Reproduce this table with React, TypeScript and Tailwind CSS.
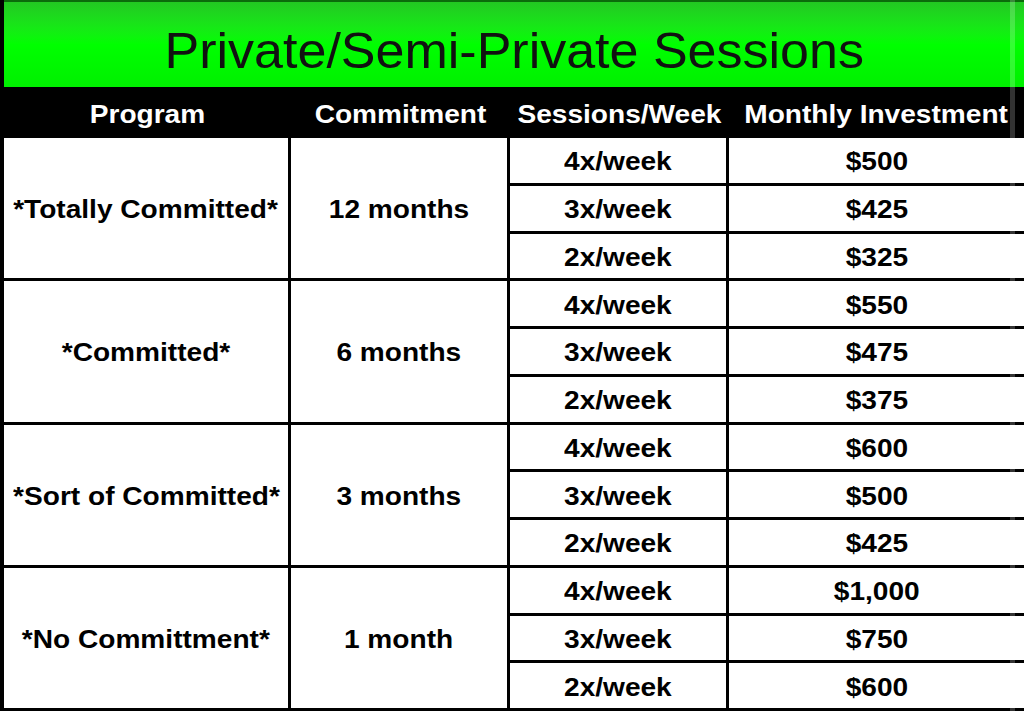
const groups = [
  {
    program: '*Totally Committed*',
    term: '12 months',
    rows: [
      ['4x/week', '$500'],
      ['3x/week', '$425'],
      ['2x/week', '$325'],
    ],
  },
  {
    program: '*Committed*',
    term: '6 months',
    rows: [
      ['4x/week', '$550'],
      ['3x/week', '$475'],
      ['2x/week', '$375'],
    ],
  },
  {
    program: '*Sort of Committed*',
    term: '3 months',
    rows: [
      ['4x/week', '$600'],
      ['3x/week', '$500'],
      ['2x/week', '$425'],
    ],
  },
  {
    program: '*No Committment*',
    term: '1 month',
    rows: [
      ['4x/week', '$1,000'],
      ['3x/week', '$750'],
      ['2x/week', '$600'],
    ],
  },
];

const cell = 'flex items-center justify-center border-black pt-[2px]';

function Txt({ children }: { children: React.ReactNode }) {
  // the source image is a little stretched sideways
  return <span className="inline-block scale-x-[1.08] leading-none whitespace-nowrap">{children}</span>;
}

export default function App() {
  return (
    <div
      className="relative w-[1024px] h-[711px] overflow-hidden bg-white border-l-4 border-black"
      style={{ fontFamily: '"Liberation Sans", Arial, sans-serif' }}
    >
      {/* title band */}
      <div className="h-[87px] border-t-2 border-[#0b6b0b] bg-gradient-to-b from-[#22c822] via-[#00ff00] to-[#00f000] flex items-center justify-center pt-[13px]">
        <h1 className="text-[#111] text-[50px] leading-none inline-block scale-x-[1.04] whitespace-nowrap">
          Private/Semi-Private Sessions
        </h1>
      </div>

      {/* column headings */}
      <div className="h-[51px] bg-black grid grid-cols-[287px_219px_219px_1fr] text-white font-bold text-[26px] pt-[3px]">
        <div className="flex items-center justify-center"><Txt>Program</Txt></div>
        <div className="flex items-center justify-center"><Txt>Commitment</Txt></div>
        <div className="flex items-center justify-center"><Txt>Sessions/Week</Txt></div>
        <div className="flex items-center justify-center"><Txt>Monthly Investment</Txt></div>
      </div>

      {/* body */}
      <div className="grid grid-cols-[287px_219px_219px_1fr] grid-rows-[repeat(12,47.75px)] text-black font-bold text-[26px]">
        {groups.map((g, gi) => (
          <div key={g.program} className="contents">
            <div
              className={`${cell} border-r-[3px] border-b-[3px]`}
              style={{ gridRow: `${gi * 3 + 1} / span 3`, gridColumn: 1 }}
            >
              <Txt>{g.program}</Txt>
            </div>
            <div
              className={`${cell} border-r-[3px] border-b-[3px]`}
              style={{ gridRow: `${gi * 3 + 1} / span 3`, gridColumn: 2 }}
            >
              <Txt>{g.term}</Txt>
            </div>
            {g.rows.map(([freq, price], ri) => (
              <div key={freq} className="contents">
                <div
                  className={`${cell} border-r-[3px] border-b-[3px]`}
                  style={{ gridRow: gi * 3 + ri + 1, gridColumn: 3 }}
                >
                  <Txt>{freq}</Txt>
                </div>
                <div
                  className={`${cell} border-b-[3px]`}
                  style={{ gridRow: gi * 3 + ri + 1, gridColumn: 4 }}
                >
                  <Txt>{price}</Txt>
                </div>
              </div>
            ))}
          </div>
        ))}
      </div>

      {/* faint light stripe near the right edge of the scan */}
      <div className="absolute top-0 bottom-0 left-[1006px] w-[5px] bg-white/20" />
    </div>
  );
}
